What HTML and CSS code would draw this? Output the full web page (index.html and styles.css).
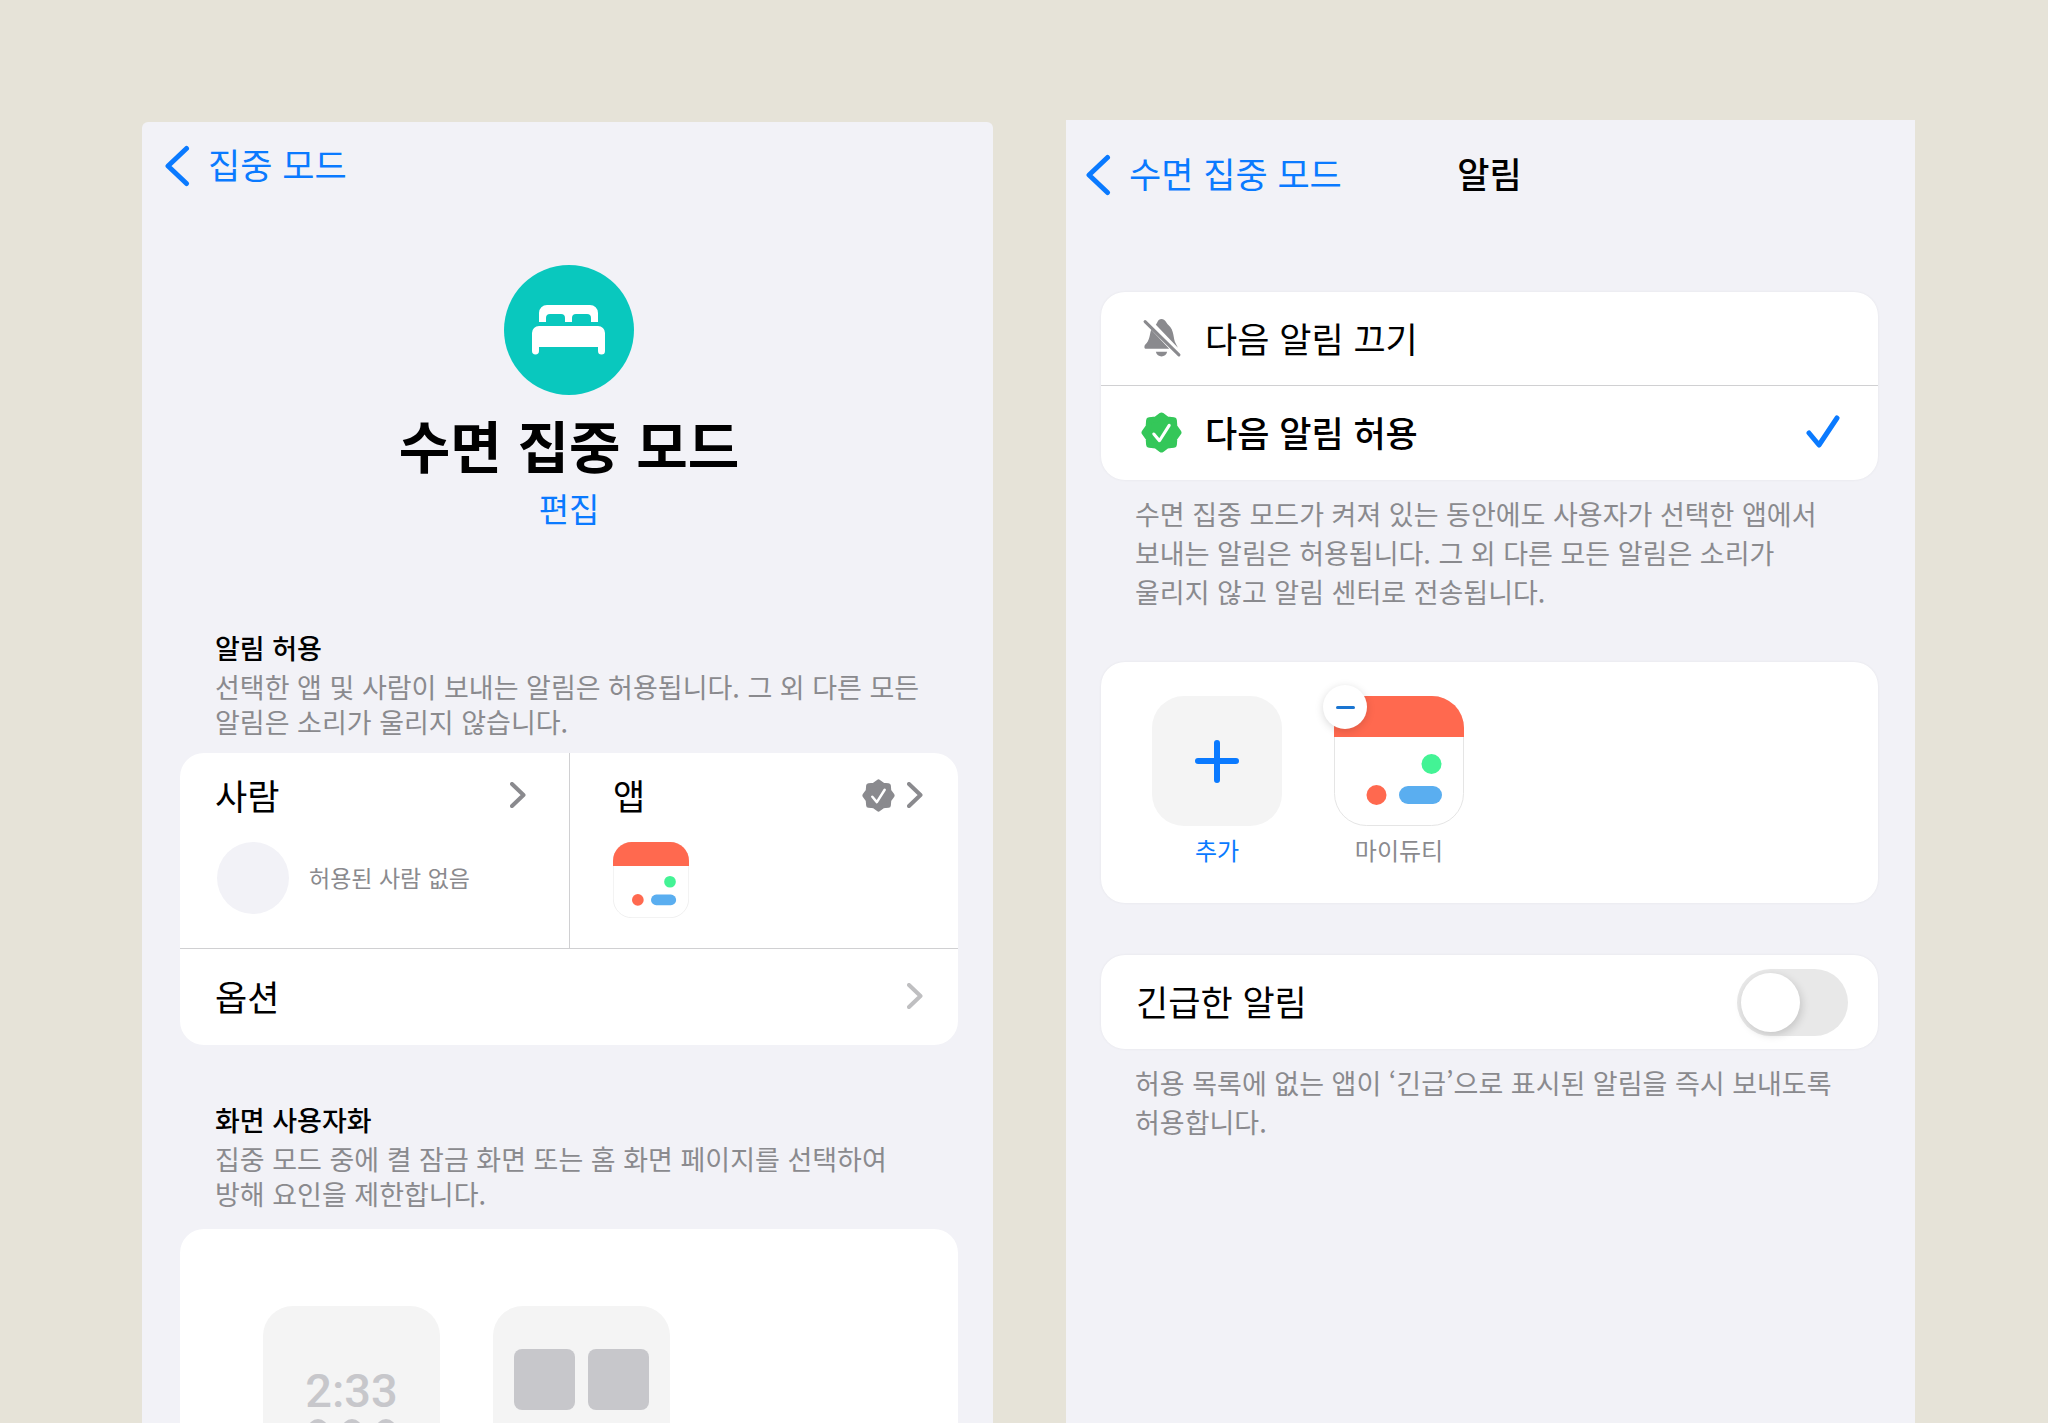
FILE: index.html
```html
<!DOCTYPE html>
<html lang="ko">
<head>
  <meta charset="UTF-8">
  <meta name="viewport" content="width=device-width, initial-scale=1">
  <title>수면 집중 모드</title>
  <link rel="stylesheet" href="styles.css">
</head>
<body>
  <svg class="defs" width="0" height="0" aria-hidden="true">
    <symbol id="back" viewBox="0 0 26 42">
      <path d="M22.5 3.5 4 21l18.5 17.5" fill="none" stroke="currentColor" stroke-width="5" stroke-linecap="round" stroke-linejoin="round"/>
    </symbol>
    <symbol id="chevron" viewBox="0 0 16 26">
      <path d="M2 2l11.5 11L2 24" fill="none" stroke="currentColor" stroke-width="4" stroke-linecap="round" stroke-linejoin="round"/>
    </symbol>
    <symbol id="seal" viewBox="0 0 40 40">
      <path d="M20 3.5 25.5 7.5 32 8 32.5 14.5 36.5 20 32.5 25.5 32 32 25.5 32.5 20 36.5 14.5 32.5 8 32 7.5 25.5 3.5 20 7.5 14.5 8 8 14.5 7.5Z" fill="currentColor" stroke="currentColor" stroke-width="6" stroke-linejoin="round"/>
      <path d="M12.5 21.5l5.5 6.5 9.5-15" fill="none" stroke="#fff" stroke-width="3" stroke-linecap="round" stroke-linejoin="round"/>
    </symbol>
    <symbol id="duty" viewBox="0 0 130 130">
      <rect x="0.5" y="0.5" width="129" height="129" rx="32" fill="#fff" stroke="#e5e5e5"/>
      <path d="M0 41V32A32 32 0 0 1 32 0h66a32 32 0 0 1 32 32v9z" fill="#ff694f"/>
      <circle cx="97.5" cy="68" r="10" fill="#43f395"/>
      <circle cx="42.5" cy="99" r="10" fill="#ff694f"/>
      <rect x="65" y="90" width="43" height="18" rx="9" fill="#5aaef0"/>
    </symbol>
  </svg>

  <main class="screens">
    <!-- 집중 모드 상세 -->
    <section class="screen focus">
      <nav class="nav">
        <a class="back" href="#"><svg class="back-icon"><use href="#back"/></svg>집중 모드</a>
      </nav>

      <header class="hero">
        <svg class="hero-icon" viewBox="0 0 130 130" aria-hidden="true">
          <circle cx="65" cy="65" r="65" fill="#09c8be"/>
          <path d="M35 57V48a8 8 0 0 1 8-8h43a8 8 0 0 1 8 8v9h-7v-4a4 4 0 0 0-4-4H72a4 4 0 0 0-4 4v4h-7v-4a4 4 0 0 0-4-4H46a4 4 0 0 0-4 4v4z" fill="#fff"/>
          <path d="M28 86V68a7 7 0 0 1 7-7h59a7 7 0 0 1 7 7v18a3 3 0 0 1-7 0v-4H35v4a3 3 0 0 1-7 0z" fill="#fff"/>
        </svg>
        <h1>수면 집중 모드</h1>
        <a class="edit" href="#">편집</a>
      </header>

      <div class="intro">
        <h2>알림 허용</h2>
        <p>선택한 앱 및 사람이 보내는 알림은 허용됩니다. 그 외 다른 모든<br>알림은 소리가 울리지 않습니다.</p>
      </div>
      <div class="card">
        <div class="split">
          <a class="cell" href="#">
            <span class="cell-head">사람<svg class="chevron"><use href="#chevron"/></svg></span>
            <span class="cell-body"><span class="avatar"></span><span class="empty">허용된 사람 없음</span></span>
          </a>
          <a class="cell" href="#">
            <span class="cell-head">앱<span class="cell-icons"><svg class="seal-small"><use href="#seal"/></svg><svg class="chevron"><use href="#chevron"/></svg></span></span>
            <span class="cell-body"><svg class="duty-small"><use href="#duty"/></svg></span>
          </a>
        </div>
        <a class="row option" href="#">옵션<svg class="chevron light"><use href="#chevron"/></svg></a>
      </div>

      <div class="intro second">
        <h2>화면 사용자화</h2>
        <p>집중 모드 중에 켤 잠금 화면 또는 홈 화면 페이지를 선택하여<br>방해 요인을 제한합니다.</p>
      </div>
      <div class="card previews">
        <div class="preview lock">
          <span class="clock">2:33</span>
          <span class="widgets"><i></i><i></i><i></i></span>
        </div>
        <div class="preview home"><i></i><i></i></div>
      </div>
    </section>

    <!-- 알림 설정 -->
    <section class="screen alerts">
      <nav class="nav">
        <a class="back" href="#"><svg class="back-icon"><use href="#back"/></svg>수면 집중 모드</a>
        <h2 class="nav-title">알림</h2>
      </nav>

      <div class="card raised choices">
        <button class="row choice" type="button">
          <svg class="choice-icon gray" viewBox="0 0 40 40" aria-hidden="true">
            <path d="M14.5 7.5C16 6.5 16 2 20 2s4.500 4 6.500 5.500C33 13 31 21 34 26l2 4z" fill="currentColor"/>
            <path d="M10 12.500 27.500 31H5c-2 0-2-2.500-1-4 5-4.500 4-9 6-14.500z" fill="currentColor"/>
            <path d="M14.500 34h11c-1 6-10 6-11 0z" fill="currentColor"/>
            <path d="M4 4.500 37 37" stroke="currentColor" stroke-width="3" stroke-linecap="round"/>
          </svg>
          <span>다음 알림 끄기</span>
        </button>
        <button class="row choice selected" type="button">
          <svg class="choice-icon green" aria-hidden="true"><use href="#seal"/></svg>
          <span>다음 알림 허용</span>
          <svg class="check" viewBox="0 0 34 34" aria-hidden="true"><path d="M3 18l10 12L31 3" fill="none" stroke="currentColor" stroke-width="5" stroke-linecap="round" stroke-linejoin="round"/></svg>
        </button>
      </div>
      <p class="note">수면 집중 모드가 켜져 있는 동안에도 사용자가 선택한 앱에서<br>보내는 알림은 허용됩니다. 그 외 다른 모든 알림은 소리가<br>울리지 않고 알림 센터로 전송됩니다.</p>

      <div class="card raised apps">
        <button class="app add" type="button">
          <svg class="app-icon" viewBox="0 0 130 130" aria-hidden="true">
            <rect width="130" height="130" rx="32" fill="#f4f4f4"/>
            <path d="M65 47v37M46 65h38" stroke="currentColor" stroke-width="6" stroke-linecap="round"/>
          </svg>
          추가
        </button>
        <div class="app">
          <svg class="app-icon"><use href="#duty"/></svg>
          마이듀티
          <button class="remove" type="button" aria-label="마이듀티 제거"></button>
        </div>
      </div>

      <div class="card raised row urgent">
        <label for="urgent">긴급한 알림</label>
        <input class="switch" type="checkbox" role="switch" id="urgent">
      </div>
      <p class="note">허용 목록에 없는 앱이 ‘긴급’으로 표시된 알림을 즉시 보내도록<br>허용합니다.</p>
    </section>
  </main>
</body>
</html>
```
FILE: styles.css
```css
* {
  box-sizing: border-box;
}
body {
  margin: 0;
  height: 100vh;
  overflow: hidden;
  background: #e6e3d8;
  color: #000;
  font-family: "Noto Sans CJK KR", "Noto Sans", sans-serif;
  font-size: 35px;
  line-height: 48px;
}
h1, h2, p {
  margin: 0;
}
a {
  color: inherit;
  text-decoration: none;
}
button {
  padding: 0;
  border: none;
  background: none;
  color: inherit;
  font: inherit;
  text-align: left;
  cursor: pointer;
}
svg {
  display: block;
  flex: none;
}
.defs {
  position: absolute;
}
.screens {
  display: grid;
  grid-template-columns: 851fr 849fr;
  gap: 73px;
  height: 100%;
  padding: 120px 133px 0 142px;
}
.screen {
  background: #f2f2f7;
}
.focus {
  margin-top: 2px;
  padding: 18px 35px 0 38px;
  border-radius: 6px 6px 0 0;
}
.alerts {
  padding: 29px 37px 0 35px;
}

/* 상단 바 */
.nav {
  display: grid;
  grid-template-columns: 1fr auto 1fr;
  align-items: center;
  margin-left: -16px;
}
.alerts .nav {
  margin-right: -16px;
}
.back {
  display: flex;
  align-items: center;
  gap: 18px;
  color: #0a7aff;
  white-space: nowrap;
}
.back-icon {
  width: 26px;
  height: 42px;
  margin-top: 4px;
}
.nav-title {
  font-size: 35px;
  font-weight: 500;
}

.hero {
  display: flex;
  flex-direction: column;
  align-items: center;
  margin-top: 77px;
}
.hero-icon {
  width: 130px;
  height: 130px;
}
.hero h1 {
  margin-top: 9px;
  font-size: 56px;
  font-weight: 700;
  line-height: 80px;
}
.edit {
  color: #0a7aff;
  font-size: 33px;
}

.intro {
  margin-top: 98px;
  padding-left: 35px;
  color: #8a8a8e;
  font-size: 27px;
  line-height: 35px;
}
.intro.second {
  margin-top: 57px;
}
.intro h2 {
  margin-bottom: 4px;
  color: #000;
  font-size: 27px;
  font-weight: 500;
}

/* 카드 */
.card {
  border-radius: 24px;
  background: #fff;
}
.intro + .card {
  margin-top: 14px;
}
.intro.second + .card {
  margin-top: 18px;
}
.raised {
  box-shadow: 0 0 3px rgba(0, 0, 0, 0.06);
}
.split {
  display: grid;
  grid-template-columns: 1fr 1fr;
  border-bottom: 1px solid #d0d0d2;
}
.cell {
  padding: 18px 35px 30px;
}
.cell + .cell {
  padding-left: 43px;
  border-left: 1px solid #d0d0d2;
}
.cell-head,
.cell-body,
.cell-icons {
  display: flex;
  align-items: center;
}
.cell-head {
  justify-content: space-between;
}
.cell:first-child .cell-head {
  padding-right: 8px;
}
.cell-icons {
  gap: 12px;
}
.cell-body {
  gap: 20px;
  margin-top: 23px;
  height: 76px;
  color: #8a8a8e;
  font-size: 23px;
}
.avatar {
  width: 72px;
  height: 72px;
  margin: 0 0 4px 2px;
  border-radius: 50%;
  background: #f2f2f7;
}
.empty {
  padding-bottom: 6px;
}
.chevron {
  width: 16px;
  height: 26px;
  color: #8a8a8e;
}
.light {
  color: #bfbfc1;
}
.seal-small {
  width: 33px;
  height: 33px;
  color: #8a8a8e;
}
.duty-small {
  width: 76px;
  height: 76px;
}
.row {
  display: flex;
  align-items: center;
  padding: 0 35px;
}
.option {
  justify-content: space-between;
  height: 96px;
  padding-bottom: 2px;
}

.previews {
  display: flex;
  gap: 53px;
  padding: 77px 83px;
}
.preview {
  width: 177px;
  height: 360px;
  border-radius: 30px;
  background: #f4f4f4;
}
.lock {
  padding-top: 61px;
  color: #c7c7cb;
  text-align: center;
}
.clock {
  display: block;
  font-family: Roboto, sans-serif;
  font-size: 47px;
  font-weight: 500;
}
.widgets {
  display: flex;
  justify-content: center;
  gap: 14px;
  margin-top: 4px;
}
.widgets i {
  width: 20px;
  height: 20px;
  border-radius: 50%;
  background: #c7c7cb;
}
.home {
  display: flex;
  justify-content: center;
  gap: 13px;
  padding-top: 43px;
}
.home i {
  width: 61px;
  height: 61px;
  border-radius: 8px;
  background: #c7c7cb;
}

/* 알림 선택 */
.choices {
  margin-top: 95px;
}
.choice {
  width: 100%;
  height: 93px;
  gap: 23px;
  padding: 0 38px 2px 35px;
}
.choice + .choice {
  height: 95px;
  border-top: 1px solid #d0d0d2;
}
.choice-icon {
  width: 41px;
  height: 41px;
  margin-left: 5px;
}
.gray {
  color: #8a8a8e;
}
.green {
  color: #34c759;
}
.selected {
  font-weight: 500;
}
.check {
  width: 34px;
  height: 34px;
  margin-left: auto;
  color: #0a7aff;
}
.note {
  padding: 14px 0 0 34px;
  color: #8a8a8e;
  font-size: 27px;
  line-height: 39px;
}

.apps {
  display: flex;
  gap: 52px;
  margin-top: 51px;
  padding: 34px 51px;
}
.app {
  position: relative;
  display: flex;
  flex-direction: column;
  align-items: center;
  gap: 4px;
  color: #8a8a8e;
  font-size: 24px;
  line-height: 39px;
}
.add {
  color: #0a7aff;
}
.app-icon {
  width: 130px;
  height: 130px;
}
.remove {
  position: absolute;
  top: -11px;
  left: -11px;
  display: grid;
  place-items: center;
  width: 44px;
  height: 44px;
  border-radius: 50%;
  background: #fff;
  box-shadow: 0 2px 8px rgba(0, 0, 0, 0.15);
}
.remove::before {
  content: "";
  width: 19px;
  height: 3px;
  border-radius: 2px;
  background: #1a75d1;
}

.urgent {
  justify-content: space-between;
  height: 94px;
  margin-top: 52px;
  padding-right: 30px;
}
.urgent label {
  padding-bottom: 2px;
}
.switch {
  appearance: none;
  width: 111px;
  height: 67px;
  margin: 0;
  padding: 4px;
  border-radius: 34px;
  background: #e8e8e8;
  cursor: pointer;
}
.switch::before {
  content: "";
  display: block;
  width: 59px;
  height: 59px;
  border-radius: 50%;
  background: #fff;
  box-shadow: 2px 3px 8px rgba(0, 0, 0, 0.15);
}
.switch:checked {
  background: #34c759;
}
.switch:checked::before {
  margin-left: 44px;
}
```
